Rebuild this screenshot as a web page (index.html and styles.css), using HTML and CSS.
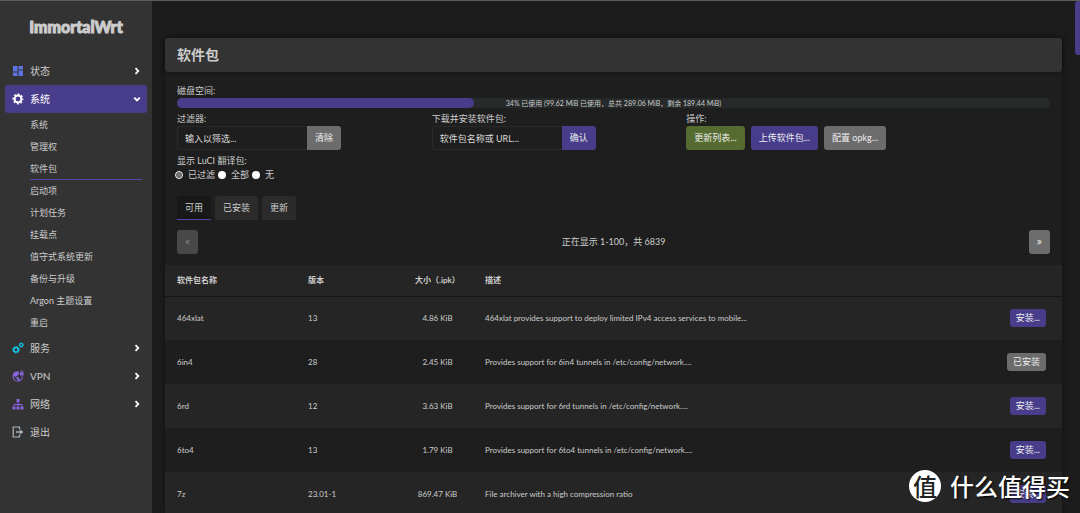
FILE: index.html
```html
<!DOCTYPE html>
<html lang="zh-CN">
<head>
<meta charset="utf-8">
<meta name="viewport" content="width=device-width, initial-scale=1">
<title>软件包 - ImmortalWrt</title>
<link rel="stylesheet" href="styles.css">
</head>
<body>
<div class="app">
  <aside class="sidebar">
    <a class="brand" href="#">ImmortalWrt</a>
    <nav class="menu">
      <a class="menu-item" href="#">
        <svg class="icon" viewBox="0 0 12 12" fill="#5e72e4"><path d="M1 1h4.500v5.500H1zM1 7.500h4.500V11H1zM6.500 1H11v3.500H6.500zM6.500 5.500H11V11H6.500z"/></svg>
        <span>状态</span>
        <svg class="arrow" viewBox="0 0 8 8"><path d="M2.500 1.200 5.300 4 2.500 6.800"/></svg>
      </a>
      <a class="menu-item active" href="#">
        <svg class="icon" viewBox="0 0 12 12"><circle cx="6" cy="6" r="3.400" fill="none" stroke="#fff" stroke-width="2"/><circle cx="6" cy="6" r="4.800" fill="none" stroke="#fff" stroke-width="1.400" stroke-dasharray="2 1.770" stroke-dashoffset="1"/></svg>
        <span>系统</span>
        <svg class="arrow" viewBox="0 0 8 8"><path d="M1.200 2.700 4 5.500 6.800 2.700"/></svg>
      </a>
      <div class="submenu">
        <a href="#">系统</a>
        <a href="#">管理权</a>
        <a class="current" href="#">软件包</a>
        <a href="#">启动项</a>
        <a href="#">计划任务</a>
        <a href="#">挂载点</a>
        <a href="#">值守式系统更新</a>
        <a href="#">备份与升级</a>
        <a href="#">Argon 主题设置</a>
        <a href="#">重启</a>
      </div>
      <a class="menu-item" href="#">
        <svg class="icon" viewBox="0 0 12 12" fill="none" stroke="#11cdef"><circle cx="4" cy="7.800" r="2.300" stroke-width="1.500"/><circle cx="4" cy="7.800" r="3.300" stroke-width=".9" stroke-dasharray="1.500 1.092"/><circle cx="9.200" cy="3" r="1.500" stroke-width="1.200"/><circle cx="9.200" cy="3" r="2.300" stroke-width=".7" stroke-dasharray="1.100 .706"/></svg>
        <span>服务</span>
        <svg class="arrow" viewBox="0 0 8 8"><path d="M2.500 1.200 5.300 4 2.500 6.800"/></svg>
      </a>
      <a class="menu-item" href="#">
        <svg class="icon" viewBox="0 0 12 12"><path fill="#8965e0" d="M6.500 1.300A5.200 5.200 0 1 0 10.900 6.500H9.600C9.900 9 8.800 9.800 8 10.200 8 9.200 7.600 8.500 6.700 8.500V7.300H4.300V6h1.300V4.700h1.700V3.200h-.8z"/><path fill="#333" d="m1.800 5.400 2.900 2.900v.8l.9.800v1C3 10.600 1.400 8.200 1.800 5.400z"/><path fill="#8965e0" fill-rule="evenodd" d="M8 2.600h.4v-.7a1.400 1.400 0 0 1 2.800 0v.7h.4v2.800H8zM9.100 2.600h1.400v-.7a.7.700 0 0 0-1.400 0z"/></svg>
        <span>VPN</span>
        <svg class="arrow" viewBox="0 0 8 8"><path d="M2.500 1.200 5.300 4 2.500 6.800"/></svg>
      </a>
      <a class="menu-item" href="#">
        <svg class="icon" viewBox="0 0 12 12"><path fill="#8965e0" d="M4.500 1h3v3h-3zM.5 8.500h3v3h-3zM4.500 8.500h3v3h-3zM8.500 8.500h3v3h-3z"/><path fill="none" stroke="#8965e0" d="M6 4v4.500M2 8.500v-2h8v2"/></svg>
        <span>网络</span>
        <svg class="arrow" viewBox="0 0 8 8"><path d="M2.500 1.200 5.300 4 2.500 6.800"/></svg>
      </a>
      <a class="menu-item" href="#">
        <svg class="icon" viewBox="0 0 12 12"><path fill="none" stroke="#adb5bd" stroke-width="1.200" d="M7.500 3.500V1H1.200v10h6.300V8.500"/><path fill="#adb5bd" d="M4 5.300h4V3.400L11.500 6 8 8.600V6.700H4z"/></svg>
        <span>退出</span>
      </a>
    </nav>
  </aside>

  <main class="main">
    <section class="card">
      <h2 class="title">软件包</h2>
      <div class="controls">
        <span class="label">磁盘空间:</span>
        <div class="progress"><div class="progress-fill" style="width:34%"></div><span class="progress-text">34% 已使用 (99.62 MiB 已使用，总共 289.06 MiB，剩余 189.44 MiB)</span></div>
        <div class="fields">
          <div>
            <label class="label" for="filter">过滤器:</label>
            <div class="group"><input id="filter" type="text" placeholder="输入以筛选..."><button class="btn grey" type="button">清除</button></div>
          </div>
          <div>
            <label class="label" for="install">下载并安装软件包:</label>
            <div class="group"><input id="install" type="text" placeholder="软件包名称或 URL..."><button class="btn purple" type="button">确认</button></div>
          </div>
          <div>
            <span class="label">操作:</span>
            <div class="actions"><button class="btn green" type="button">更新列表...</button><button class="btn purple" type="button">上传软件包...</button><button class="btn grey" type="button">配置 opkg...</button></div>
          </div>
        </div>
        <span class="label">显示 LuCI 翻译包:</span>
        <div class="radios">
          <label><input type="radio" name="i18n" checked>已过滤</label>
          <label><input type="radio" name="i18n">全部</label>
          <label><input type="radio" name="i18n">无</label>
        </div>
        <div class="tabs"><button class="tab selected" type="button">可用</button><button class="tab" type="button">已安装</button><button class="tab" type="button">更新</button></div>
        <div class="pager"><button class="btn grey" type="button" disabled>«</button><span>正在显示 1-100，共 6839</span><button class="btn grey" type="button">»</button></div>
      </div>
      <table class="packages">
        <thead>
          <tr><th class="c-name">软件包名称</th><th class="c-version">版本</th><th class="c-size">大小（.ipk）</th><th>描述</th><th class="c-action"></th></tr>
        </thead>
        <tbody>
          <tr><td>464xlat</td><td>13</td><td class="c-size">4.86 KiB</td><td>464xlat provides support to deploy limited IPv4 access services to mobile...</td><td class="c-action"><button class="btn small purple" type="button">安装...</button></td></tr>
          <tr><td>6in4</td><td>28</td><td class="c-size">2.45 KiB</td><td>Provides support for 6in4 tunnels in /etc/config/network....</td><td class="c-action"><button class="btn small grey" type="button">已安装</button></td></tr>
          <tr><td>6rd</td><td>12</td><td class="c-size">3.63 KiB</td><td>Provides support for 6rd tunnels in /etc/config/network....</td><td class="c-action"><button class="btn small purple" type="button">安装...</button></td></tr>
          <tr><td>6to4</td><td>13</td><td class="c-size">1.79 KiB</td><td>Provides support for 6to4 tunnels in /etc/config/network....</td><td class="c-action"><button class="btn small purple" type="button">安装...</button></td></tr>
          <tr><td>7z</td><td>23.01-1</td><td class="c-size">869.47 KiB</td><td>File archiver with a high compression ratio</td><td class="c-action"><button class="btn small purple" type="button">安装...</button></td></tr>
        </tbody>
      </table>
    </section>
  </main>
</div>
<div class="scroll-thumb"></div>
<div class="watermark"><span class="seal">值</span><span>什么值得买</span></div>
</body>
</html>
```
FILE: styles.css
```css
* { box-sizing: border-box; }

body {
  margin: 0;
  height: 100vh;
  overflow: hidden;
  background: #1e1e1e;
  color: #ccc;
  font: 9px/12px Lato, "Noto Sans CJK SC", sans-serif;
}

a { color: inherit; text-decoration: none; }
button, input { font: inherit; color: inherit; }

.app {
  display: flex;
  height: 100%;
  border-top: 1px solid #5c5c5c;
}

/* Sidebar */
.sidebar {
  flex: 0 0 152px;
  padding: 14px 5px 0;
  background: #333;
}

.brand {
  display: block;
  margin-bottom: 18px;
  text-align: center;
  font: 900 16px/24px Lato, sans-serif;
  -webkit-text-stroke: 1px #ccc;
}

.menu-item {
  display: flex;
  align-items: center;
  gap: 6px;
  height: 28px;
  padding: 0 6px 0 7px;
  border-radius: 3px;
  font-size: 10px;
}

.menu-item.active { background: #483d8b; color: #fff; }
.icon { width: 12px; height: 12px; }
.arrow {
  width: 8px;
  height: 8px;
  margin-left: auto;
  fill: none;
  stroke: #fff;
  stroke-width: 1.8;
}

.submenu { padding: 1px 5px 0 25px; }
.submenu a {
  display: block;
  height: 22px;
  line-height: 21px;
  border-bottom: 1px solid transparent;
}
.submenu .current { border-color: #5245a8; }

/* Content */
.main { flex: 1; padding: 37px 18px 0 13px; background: #1c1c1c; }
.card {
  background: #1e1e1e;
  border-radius: 3px;
  box-shadow: 0 0 6px rgba(0, 0, 0, .35);
}
.title {
  margin: 0;
  padding: 0 12px;
  border-radius: 3px;
  background: #333;
  box-shadow: 0 1px 4px rgba(0, 0, 0, .35);
  font-size: 14px;
  font-weight: 700;
  line-height: 34px;
}

.controls { padding: 12px 12px 11px; }
.label { display: block; line-height: 14px; }

.progress {
  position: relative;
  height: 10px;
  margin-bottom: 3px;
  border-radius: 5px;
  background: #272a2b;
}
.progress-fill { height: 100%; border-radius: 5px; background: #483d8b; }
.progress-text {
  position: absolute;
  inset: 0;
  text-align: center;
  font-size: 7px;
  line-height: 10px;
}

.fields {
  display: grid;
  grid-template-columns: 7fr 7fr 10fr;
  margin-bottom: 4px;
}
.fields .label { line-height: 15px; }
.group { display: flex; }
.group input {
  width: 130px;
  height: 24px;
  padding: 0 7px;
  border: 1px solid #2a2a2a;
  border-right: 0;
  border-radius: 3px 0 0 3px;
  background: #1e1e1e;
}
.group input::placeholder { color: #ddd; opacity: 1; }
.group .btn { border-radius: 0 3px 3px 0; }

.btn {
  height: 24px;
  padding: 0 8px;
  border: 0;
  border-radius: 3px;
  color: #eee;
  white-space: nowrap;
}
.purple { background: #483d8b; }
.green { background: #556b2f; }
.grey { background: #6c6c6c; }
.btn:disabled { background: #484848; color: #808080; }
.small { height: 18px; padding: 0 6px; }
.actions { display: flex; gap: 6px; }

.radios { display: flex; gap: 3px; line-height: 14px; }
.radios label { display: flex; align-items: center; gap: 5px; }
.radios input {
  appearance: none;
  width: 8px;
  height: 8px;
  margin: 0 0 0 -2px;
  border-radius: 50%;
  background: #fff;
}
.radios label + label input { margin-left: 0; }
.radios input:checked { border: 1px solid #eee; background: #777; box-shadow: inset 0 0 0 1px #555; }

.tabs { display: flex; gap: 4px; margin: 14px 0 10px; }
.tab {
  height: 24px;
  padding: 0 8px;
  border: 0;
  border-bottom: 1px solid #2b2b2b;
  border-radius: 3px 3px 0 0;
  background: #2b2b2b;
}
.tab.selected { background: #181818; border-color: #5245a8; }

.pager { display: flex; justify-content: space-between; align-items: center; }
.pager .btn { font-family: Inter, sans-serif; }

.packages {
  width: 100%;
  border-collapse: collapse;
  table-layout: fixed;
  font-size: 8px;
}
.packages th, .packages td { padding: 0 12px; text-align: left; }
.packages th { height: 31px; border-bottom: 1px solid #161616; background: #252525; }
.packages td { height: 44px; }
.packages tbody tr:nth-child(odd) { background: #252525; }
.c-name { width: 131px; }
.c-version { width: 106px; }
.packages .c-size { width: 71px; padding: 0; text-align: center; }
.packages .c-action { width: 100px; padding: 0 16px; text-align: right; }
.packages .btn { font-size: 9px; }

/* Overlays */
.scroll-thumb {
  position: absolute;
  top: 1px;
  right: 0;
  width: 5px;
  height: 54px;
  border-radius: 3px 0 0 3px;
  background: #483d8b;
}
.watermark {
  position: absolute;
  right: 10px;
  bottom: 11px;
  display: flex;
  align-items: center;
  gap: 9px;
  color: #fff;
  font: 500 24px/32px "Noto Sans CJK SC", sans-serif;
  text-shadow: 1px 1px 2px #000;
}
.seal {
  width: 32px;
  height: 32px;
  border-radius: 50%;
  background: #fff;
  color: #222;
  text-align: center;
  text-shadow: none;
}
```
